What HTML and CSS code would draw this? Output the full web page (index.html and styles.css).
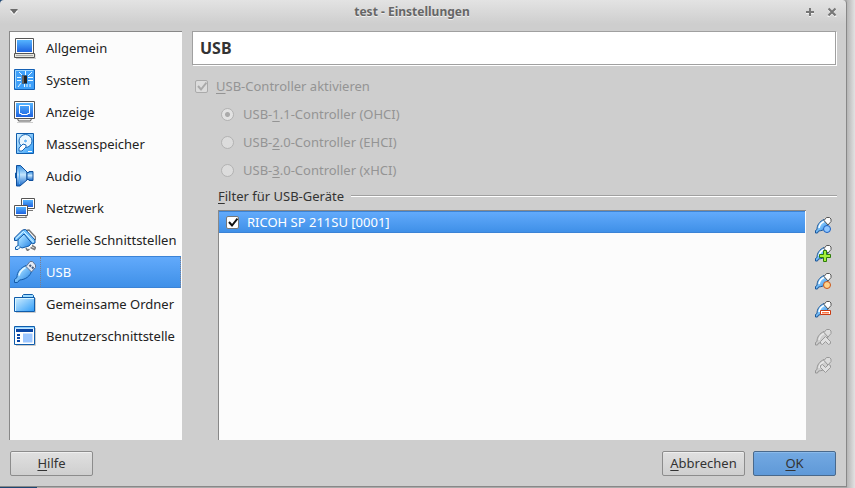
FILE: index.html
```html
<!DOCTYPE html>
<html lang="de">
<head>
    <meta charset="UTF-8">
    <meta name="viewport" content="width=device-width, initial-scale=1.0">
    <title>test - Einstellungen</title>
    <link rel="stylesheet" href="styles.css">
</head>
<body>
    <svg class="defs" aria-hidden="true">
        <defs>
            <linearGradient id="screen" x1="0" y1="0" x2="0" y2="1">
                <stop offset="0" stop-color="#55b4ff"/>
                <stop offset="1" stop-color="#1d62e0"/>
            </linearGradient>
            <linearGradient id="sky" x1="0" y1="0" x2="1" y2="1">
                <stop offset="0" stop-color="#d4f0ff"/>
                <stop offset="1" stop-color="#2f9cf8"/>
            </linearGradient>
            <linearGradient id="cone" x1="0" y1="0" x2="0" y2="1">
                <stop offset="0" stop-color="#2f8be0"/>
                <stop offset="0.45" stop-color="#c4e6ff"/>
                <stop offset="1" stop-color="#1264c8"/>
            </linearGradient>
            <linearGradient id="plug-fill" x1="0" y1="0" x2="1" y2="1">
                <stop offset="0" stop-color="#e6f6ff"/>
                <stop offset="0.35" stop-color="#8fd0ff"/>
                <stop offset="1" stop-color="#1c7be0"/>
            </linearGradient>
        </defs>
        <symbol id="plug" viewBox="0 0 18 18">
            <path d="M1.500 14.500 3 13.500C3 9 5.500 5.500 10 3.500l4 5c-1 4-4 6-9.500 6.500L3.500 17h-2z" fill="url(#plug-fill)" stroke="#1a5597"/>
            <path d="M5 12C5.500 9 7.500 6.500 10 5.500" fill="none" stroke="#fff" stroke-width="1.500"/>
            <path d="m10 4.500 2.500-3h3L17 3v2.500L14 9z" fill="#fff" stroke="#555"/>
        </symbol>
        <symbol id="plug-grey" viewBox="0 0 18 18">
            <path d="M1.500 14.500 3 13.500C3 9 5.500 5.500 10 3.500l4 5c-1 4-4 6-9.500 6.500L3.500 17h-2z" fill="#cfcfcf" stroke="#949494"/>
            <path d="M5 12C5.500 9 7.500 6.500 10 5.500" fill="none" stroke="#e8e8e8" stroke-width="1.500"/>
            <path d="m10 4.500 2.500-3h3L17 3v2.500L14 9z" fill="#ddd" stroke="#999"/>
        </symbol>
    </svg>

    <div class="window">
        <header class="titlebar">
            <button class="title-button" aria-label="Menü">
                <svg width="10" height="8" viewBox="0 0 10 8"><path d="M1 3h8L5 7z" fill="#fff"/><path d="M1 1h8L5 6z" fill="#6b6b6b"/></svg>
            </button>
            <h1>test - Einstellungen</h1>
            <div class="title-actions">
                <button class="title-button" aria-label="Maximieren">
                    <svg width="10" height="10" viewBox="0 0 10 10"><path d="M5 2v8M1 6h8" stroke="#f4f4f4" stroke-width="2"/><path d="M5 1v8M1 5h8" stroke="#777" stroke-width="2"/></svg>
                </button>
                <button class="title-button" aria-label="Schließen">
                    <svg width="10" height="10" viewBox="0 0 10 10"><path d="m1 2 8 8M9 2l-8 8" stroke="#f4f4f4" stroke-width="2"/><path d="m1.500 1.500 7 7M8.500 1.500l-7 7" stroke="#777" stroke-width="2.200"/></svg>
                </button>
            </div>
        </header>

        <div class="content">
            <nav class="sidebar">
                <a href="#allgemein">
                    <svg class="icon" viewBox="0 0 22 22"><path d="M2 21.500h20V17" stroke="#ccc" fill="none"/><path d="M1.500 1.500h18v15h-18z" fill="#fff" stroke="#555"/><path d="M3 3h15v12H3z" fill="url(#screen)"/><path d="M.5 16.500h20v4H.5z" fill="#e6e6df" stroke="#555"/><path d="M2 18.500h17" stroke="#aaa"/></svg>
                    Allgemein
                </a>
                <a href="#system">
                    <svg class="icon" viewBox="0 0 22 22"><path d="M.5.5h20v20H.5z" fill="#3ea0fa" stroke="#1460b4"/><path d="M1.500 19V1.500H19" fill="none" stroke="#9fd8ff"/><path d="M3 8.500h4M3 11.500h4M14 8.500h5M14 11.500h5M11.500 2v4M14 7l4-4M7 14l-3 4M10.500 15v3M13 15v3M16 15v3M5 3l3 3" stroke="#e8f8ff" fill="none"/><path d="M8 6.500h5v8H8z" fill="#222"/><path d="M8 6.500h2v8H8z" fill="#666"/></svg>
                    System
                </a>
                <a href="#anzeige">
                    <svg class="icon" viewBox="0 0 22 22"><path d="M3 21.500h16" stroke="#ccc"/><path d="M3.500 17.500h14l-1 2.500h-12z" fill="#eee" stroke="#555"/><path d="M.5.5h20v17H.5z" fill="#fff" stroke="#555"/><path d="M2 2h17v14H2z" fill="url(#screen)"/><path d="M5.500 4.500h10v8h-2v1h-6v-1h-2z" fill="none" stroke="#fff"/></svg>
                    Anzeige
                </a>
                <a href="#massenspeicher">
                    <svg class="icon" viewBox="0 0 22 22"><path d="M2.500.5h17v20h-17z" fill="url(#sky)" stroke="#0f5cab"/><circle cx="11.500" cy="8" r="6.500" fill="#e9f7ff" stroke="#1868b8"/><circle cx="11.500" cy="8" r="2" fill="#68b5f4" stroke="#fff"/><path d="m12 12-3-1-4 4v3h3l4-4z" fill="#fff" stroke="#1868b8"/><path d="M14 18h4v1h-4z" fill="#fff"/></svg>
                    Massenspeicher
                </a>
                <a href="#audio">
                    <svg class="icon" viewBox="0 0 22 22"><path d="M2.500 8H1.500v5h1" fill="none" stroke="#0f5cab"/><path d="M2.500.5h4L13 7v8l-7 6H2.500z" fill="url(#cone)" stroke="#0f4f9c"/><path d="M13 7.500h2v-1h4v9h-4v-1h-2z" fill="url(#cone)" stroke="#0f4f9c"/><path d="M5.500 2v17" stroke="#5baef3"/></svg>
                    Audio
                </a>
                <a href="#netzwerk">
                    <svg class="icon" viewBox="0 0 22 22"><path d="M14 13.500h5" stroke="#777"/><path d="M7.500 1.500h13v10h-13z" fill="#fff" stroke="#555"/><path d="M9 3h10v7H9z" fill="url(#screen)"/><path d="M3.500 18.500h8l1 2h-10z" fill="#eee" stroke="#777"/><path d="M.5 8.500h13v10H.5z" fill="#fff" stroke="#555"/><path d="M2 10h10v7H2z" fill="url(#screen)"/></svg>
                    Netzwerk
                </a>
                <a href="#seriell">
                    <svg class="icon" viewBox="0 0 22 22"><path d="m12 1.500 3-.5 6.500 7v3M18 16.500l3.500 2-1 2-4-2M12 19l1.500 2.500 2-1.500" fill="none" stroke="#777" stroke-width="1.500"/><path d="m4 9 6-6 8.500 10-3.500 4-7 2-4-2.500z" fill="url(#plug-fill)" stroke="#0f5cab"/><path d="M4 16.500 1.500 18v2.500H4L6.500 18" fill="#d7f1ff" stroke="#0f5cab"/><path d="M.5 9 8.500 1l3-.5L21 11v3l-2.500 1L10 5 3 11.500H.5z" fill="#71c4ff" stroke="#0f4f9c"/><path d="M2 9.500 9.500 2.500 19.500 13" fill="none" stroke="#e6f8ff"/></svg>
                    Serielle Schnittstellen
                </a>
                <a href="#usb" class="active" aria-current="page">
                    <svg class="icon" viewBox="0 0 22 22"><path d="M.5 18.500 3 16.500C3 10.500 6.500 7 12 4.500l5.500 6C16 15 12 18.500 5.500 19L3.500 21.500h-3z" fill="url(#plug-fill)" stroke="#145ba9"/><path d="M5 14.500c1-4 3-6 6.500-8" fill="none" stroke="#e6f7ff" stroke-width="1.500"/><path d="m12 5.500 4-5h2.500l3 3.500v2.500L17.500 11z" fill="#e4eaf4" stroke="#5d7292"/><path d="m15.500 4 1.500 1.500M18 6l1.500 1.500" stroke="#445b7d" stroke-width="2"/></svg>
                    <span>USB</span>
                </a>
                <a href="#ordner">
                    <svg class="icon" viewBox="0 0 22 22"><path d="M2 19.500h19.500V5" fill="none" stroke="#ccc"/><path d="M8.500 4V2.500l1-1h9l1 1V17" fill="#9fdcff" stroke="#0f5cab"/><path d="M.5 4.500h20v14H.5z" fill="url(#sky)" stroke="#0f5cab"/><path d="M1.500 18V5.500H20" fill="none" stroke="#d9f5ff"/></svg>
                    Gemeinsame Ordner
                </a>
                <a href="#benutzerschnittstelle">
                    <svg class="icon" viewBox="0 0 22 22"><path d="M2 20.500h19.500V3" fill="none" stroke="#ccc"/><path d="M.5 1.500h20v18H.5z" fill="#fff" stroke="#0f5cab"/><path d="M1 2h19v1.500H1z" fill="#8ccfff"/><path d="M2 4h17v3H2z" fill="#0a46a5"/><path d="M3 9h3v2H3zM3 12h3v2H3zM3 15h3v2H3z" fill="#0a46a5"/><path d="M9 8.500h9.500v9H9z" fill="#9cc6ff"/></svg>
                    Benutzerschnittstelle
                </a>
            </nav>

            <main class="page">
                <h2>USB</h2>
                <label class="option"><input type="checkbox" checked disabled><span><u>U</u>SB-Controller aktivieren</span></label>
                <div class="controllers">
                    <label class="option"><input type="radio" name="controller" checked disabled><span>USB-<u>1</u>.1-Controller (OHCI)</span></label>
                    <label class="option"><input type="radio" name="controller" disabled><span>USB-<u>2</u>.0-Controller (EHCI)</span></label>
                    <label class="option"><input type="radio" name="controller" disabled><span>USB-<u>3</u>.0-Controller (xHCI)</span></label>
                </div>
                <section class="filters">
                    <h3><span><u>F</u>ilter für USB-Geräte</span></h3>
                    <div class="filter-body">
                        <div class="filter-list">
                            <label class="filter-row"><input type="checkbox" checked><span>RICOH SP 211SU [0001]</span></label>
                        </div>
                        <div class="toolbar">
                            <button aria-label="Leeren Filter hinzufügen">
                                <svg viewBox="0 0 18 18"><use href="#plug"/><circle cx="13" cy="13" r="3.500" fill="#8fc6ff" stroke="#1b5fc0"/></svg>
                            </button>
                            <button aria-label="Filter von Gerät hinzufügen">
                                <svg viewBox="0 0 18 18"><use href="#plug"/><path d="M9.500 6.500h3v4h4v3h-4v4h-3v-4h-4v-3h4z" fill="#a5f03c" stroke="#2e7d0b"/></svg>
                            </button>
                            <button aria-label="Filter bearbeiten">
                                <svg viewBox="0 0 18 18"><use href="#plug"/><circle cx="13" cy="13" r="3.500" fill="#ffd18a" stroke="#c8541a"/></svg>
                            </button>
                            <button aria-label="Filter entfernen">
                                <svg viewBox="0 0 18 18"><use href="#plug"/><path d="M6.500 10.500h10v4h-10z" fill="#fff" stroke="#c83a12"/><path d="M8 12h7v1.500H8z" fill="#ff7440"/></svg>
                            </button>
                            <button aria-label="Nach oben" disabled>
                                <svg viewBox="0 0 18 18"><use href="#plug-grey"/><path d="m11.500 8.500 5 5v2l-2 1-3-3-3 3-2-1v-2z" fill="#e0e0e0" stroke="#999"/></svg>
                            </button>
                            <button aria-label="Nach unten" disabled>
                                <svg viewBox="0 0 18 18"><use href="#plug-grey"/><path d="m11.500 16.500-5-5v-2l2-1 3 3 3-3 2 1v2z" fill="#e0e0e0" stroke="#999"/></svg>
                            </button>
                        </div>
                    </div>
                </section>
            </main>
        </div>

        <footer class="buttons">
            <button class="push help"><u>H</u>ilfe</button>
            <button class="push"><u>A</u>bbrechen</button>
            <button class="push primary"><u>O</u>K</button>
        </footer>
    </div>
</body>
</html>
```
FILE: styles.css
```css
* {
    box-sizing: border-box;
}
body {
    margin: 0;
    padding: 0 8px 1px 0;
    min-height: 100vh;
    display: flex;
    font-family: "Noto Sans", sans-serif;
    font-size: 13px;
    line-height: 20px;
    color: #333;
    /* desktop behind the dialog, with the dialog's shadow on the right */
    background:
        linear-gradient(to left, #e2e2e2, #b5b5b5) right top / 8px 100% no-repeat,
        linear-gradient(to right, #1d4672 37px, #aaa 37px);
}
h1, h2, h3 {
    margin: 0;
    font-size: 13px;
}
button {
    font: inherit;
    color: inherit;
}
u {
    text-underline-offset: 2px;
    text-decoration-thickness: 1px;
    text-decoration-skip-ink: none;
}
.defs {
    position: absolute;
    width: 0;
    height: 0;
}
.window {
    flex: 1;
    display: flex;
    flex-direction: column;
    border-right: 1px solid #888;
    border-bottom: 1px solid #888;
    border-radius: 4px 4px 0 0;
    background: linear-gradient(#e3e3e3, #cecece 24px);
}

/* title bar */
.titlebar {
    display: flex;
    align-items: center;
    height: 23px;
    padding: 0 9px;
}
.titlebar h1 {
    flex: 1;
    text-align: center;
    font-size: 12px;
    color: #666;
    text-shadow: 0 1px #f0f0f0;
}
.title-actions {
    display: flex;
    gap: 12px;
}
.title-button {
    display: flex;
    padding: 0;
    border: none;
    background: none;
}

/* main area */
.content {
    flex: 1;
    display: flex;
    gap: 10px;
    padding: 8px 9px 0;
}
.sidebar {
    width: 173px;
    flex-shrink: 0;
    padding-right: 1px;
    border: 1px solid #888;
    border-width: 1px 0 0 1px;
    background: #fcfcfc;
}
.sidebar a {
    display: flex;
    align-items: center;
    gap: 10px;
    height: 32px;
    padding-left: 4px;
    color: #222;
    text-decoration: none;
    white-space: nowrap;
}
.sidebar .active {
    gap: 4px;
    color: #fff;
    background: linear-gradient(#62aafb, #3f90e8);
    border: 1px solid #3b83d6;
    border-width: 1px 0;
}
.active span {
    flex: 1;
    padding-left: 5px;
    line-height: 30px;
    border: 1px dotted #7d7f8c;
    border-width: 0 1px;
}
.icon {
    flex-shrink: 0;
    width: 22px;
    height: 22px;
}
.page {
    flex: 1;
    display: flex;
    flex-direction: column;
}
.page h2 {
    height: 34px;
    padding: 0 7px;
    border: 1px solid #a0a0a0;
    box-shadow: 1px 1px #fff;
    background: #fff;
    font-size: 16px;
    line-height: 32px;
    margin: 0 1px 7px 0;
}

/* check boxes and radio buttons */
.option {
    display: flex;
    align-items: center;
    gap: 8px;
    height: 28px;
    padding-left: 3px;
    color: #949494;
}
.controllers {
    padding-left: 26px;
}
.controllers .option {
    gap: 9px;
}
input {
    appearance: none;
    flex-shrink: 0;
    width: 13px;
    height: 13px;
    margin: 0;
    border: 1px solid #aaa;
    border-radius: 2px;
    background: #dcdcdc;
}
input[type="radio"] {
    border-radius: 50%;
    border-color: #b2b2b2;
}
input[type="radio"]:checked {
    background: radial-gradient(#aaa 2px, #e2e2e2 3px);
}
input[type="checkbox"]:checked {
    background: url("data:image/svg+xml,%3Csvg xmlns='http://www.w3.org/2000/svg' viewBox='0 0 11 11'%3E%3Cpath d='M2 5l3 3.500L10.500 1.500' fill='none' stroke='%23aaa' stroke-width='2'/%3E%3C/svg%3E") #dcdcdc;
}

/* device filters */
.filters {
    flex: 1;
    display: flex;
    flex-direction: column;
    padding-left: 26px;
}
.filters h3 {
    display: flex;
    align-items: center;
    gap: 7px;
    height: 24px;
    margin-bottom: 2px;
    font-weight: normal;
}
.filters h3::after {
    content: "";
    flex: 1;
    border-top: 1px solid #a0a0a0;
    border-bottom: 1px solid #fff;
}
.filter-body {
    flex: 1;
    display: flex;
    gap: 8px;
}
.filter-list {
    flex: 1;
    padding-right: 1px;
    border: 1px solid #888;
    border-width: 1px 0 0 1px;
    background: #fcfcfc;
}
.filter-row {
    display: flex;
    align-items: center;
    gap: 8px;
    height: 22px;
    padding-left: 7px;
    border: 1px solid #3b83d6;
    border-width: 1px 0;
    color: #fff;
    background: linear-gradient(#62aafb, #3f90e8);
}
.filter-row input[type="checkbox"]:checked {
    border-color: #777;
    background: url("data:image/svg+xml,%3Csvg xmlns='http://www.w3.org/2000/svg' viewBox='0 0 11 11'%3E%3Cpath d='M2 5l3 3.500L10.500 1.500' fill='none' stroke='%23111' stroke-width='2'/%3E%3C/svg%3E") #fff;
}
.toolbar {
    display: flex;
    flex-direction: column;
    gap: 10px;
    padding: 6px 5px 0 0;
}
.toolbar button {
    padding: 0;
    border: none;
    background: none;
    height: 18px;
}
.toolbar svg {
    display: block;
    width: 18px;
    height: 18px;
}

/* bottom buttons */
.buttons {
    display: flex;
    gap: 8px;
    padding: 11px 10px 10px;
}
.help {
    margin-right: auto;
}
.push {
    width: 83px;
    height: 25px;
    padding: 0 0 2px;
    border: 1px solid #8c8c8c;
    border-radius: 2px;
    background: linear-gradient(#e0e0e0, #cfcfcf);
    box-shadow: inset 0 1px #efefef;
}
.primary {
    border-color: #49698c;
    background: linear-gradient(#73a9e2, #5f99d8);
    box-shadow: inset 0 1px #8bbaea;
}
```
